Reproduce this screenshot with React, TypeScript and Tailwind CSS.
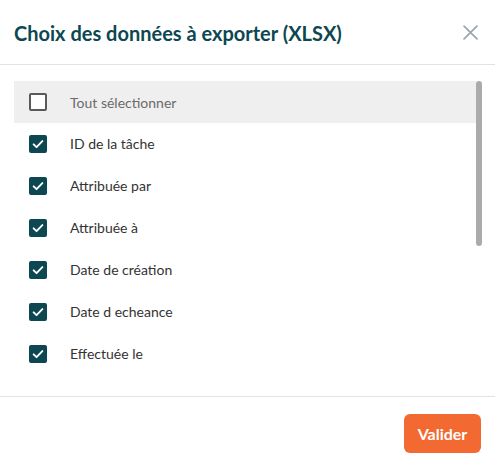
import React from "react";

const items = [
  "ID de la tâche",
  "Attribuée par",
  "Attribuée à",
  "Date de création",
  "Date d echeance",
  "Effectuée le",
];

function Check({ checked }: { checked: boolean }) {
  if (!checked) {
    return <div className="w-[18px] h-[18px] rounded-[2px] border-2 border-[#5a5a5a] bg-white" />;
  }
  return (
    <div className="w-[18px] h-[18px] rounded-[2px] bg-[#0d4751] flex items-center justify-center">
      <svg width="14" height="14" viewBox="0 0 24 24" fill="none" stroke="white" strokeWidth="3.2" strokeLinecap="round" strokeLinejoin="round">
        <path d="M4.5 12.5l5 5L19.5 7" />
      </svg>
    </div>
  );
}

export default function App() {
  return (
    <div className="w-[495px] h-[466px] bg-white flex flex-col" style={{ fontFamily: "Lato, 'Noto Sans', sans-serif" }}>
      <div className="h-[65px] shrink-0 border-b border-[#e2e2e2] flex items-center justify-between pl-[14px] pr-[17px]">
        <h1 className="text-[20px] font-bold text-[#0d4751] leading-none pt-[2px]">Choix des données à exporter (XLSX)</h1>
        <svg width="15" height="15" viewBox="0 0 14 14" stroke="#9ba5b2" strokeWidth="1.6" strokeLinecap="round">
          <path d="M1 1l12 12M13 1L1 13" />
        </svg>
      </div>
      <div className="h-[332px] shrink-0 border-b border-[#e2e2e2] overflow-hidden flex pt-[16px] pl-[14px]">
        <div className="w-[462px] flex flex-col">
          <div className="h-[42px] shrink-0 bg-[#efefef] flex items-center pl-[15px] gap-[23px]">
            <Check checked={false} />
            <span className="text-[14px] text-[#6a6a6a]">Tout sélectionner</span>
          </div>
          {items.map((t) => (
            <div key={t} className="h-[42px] shrink-0 flex items-center pl-[15px] gap-[23px] pb-[1px]">
              <Check checked={true} />
              <span className="text-[14px] text-[#333333]">{t}</span>
            </div>
          ))}
        </div>
        <div className="w-[6px] h-[165px] rounded-full bg-[#ababab]" />
      </div>
      <div className="flex-1 flex justify-end items-start pt-[17px] pr-[14px]">
        <button className="h-[39px] w-[77px] rounded-[6px] bg-[#f26a32] text-white text-[16px] font-bold leading-none">Valider</button>
      </div>
    </div>
  );
}
